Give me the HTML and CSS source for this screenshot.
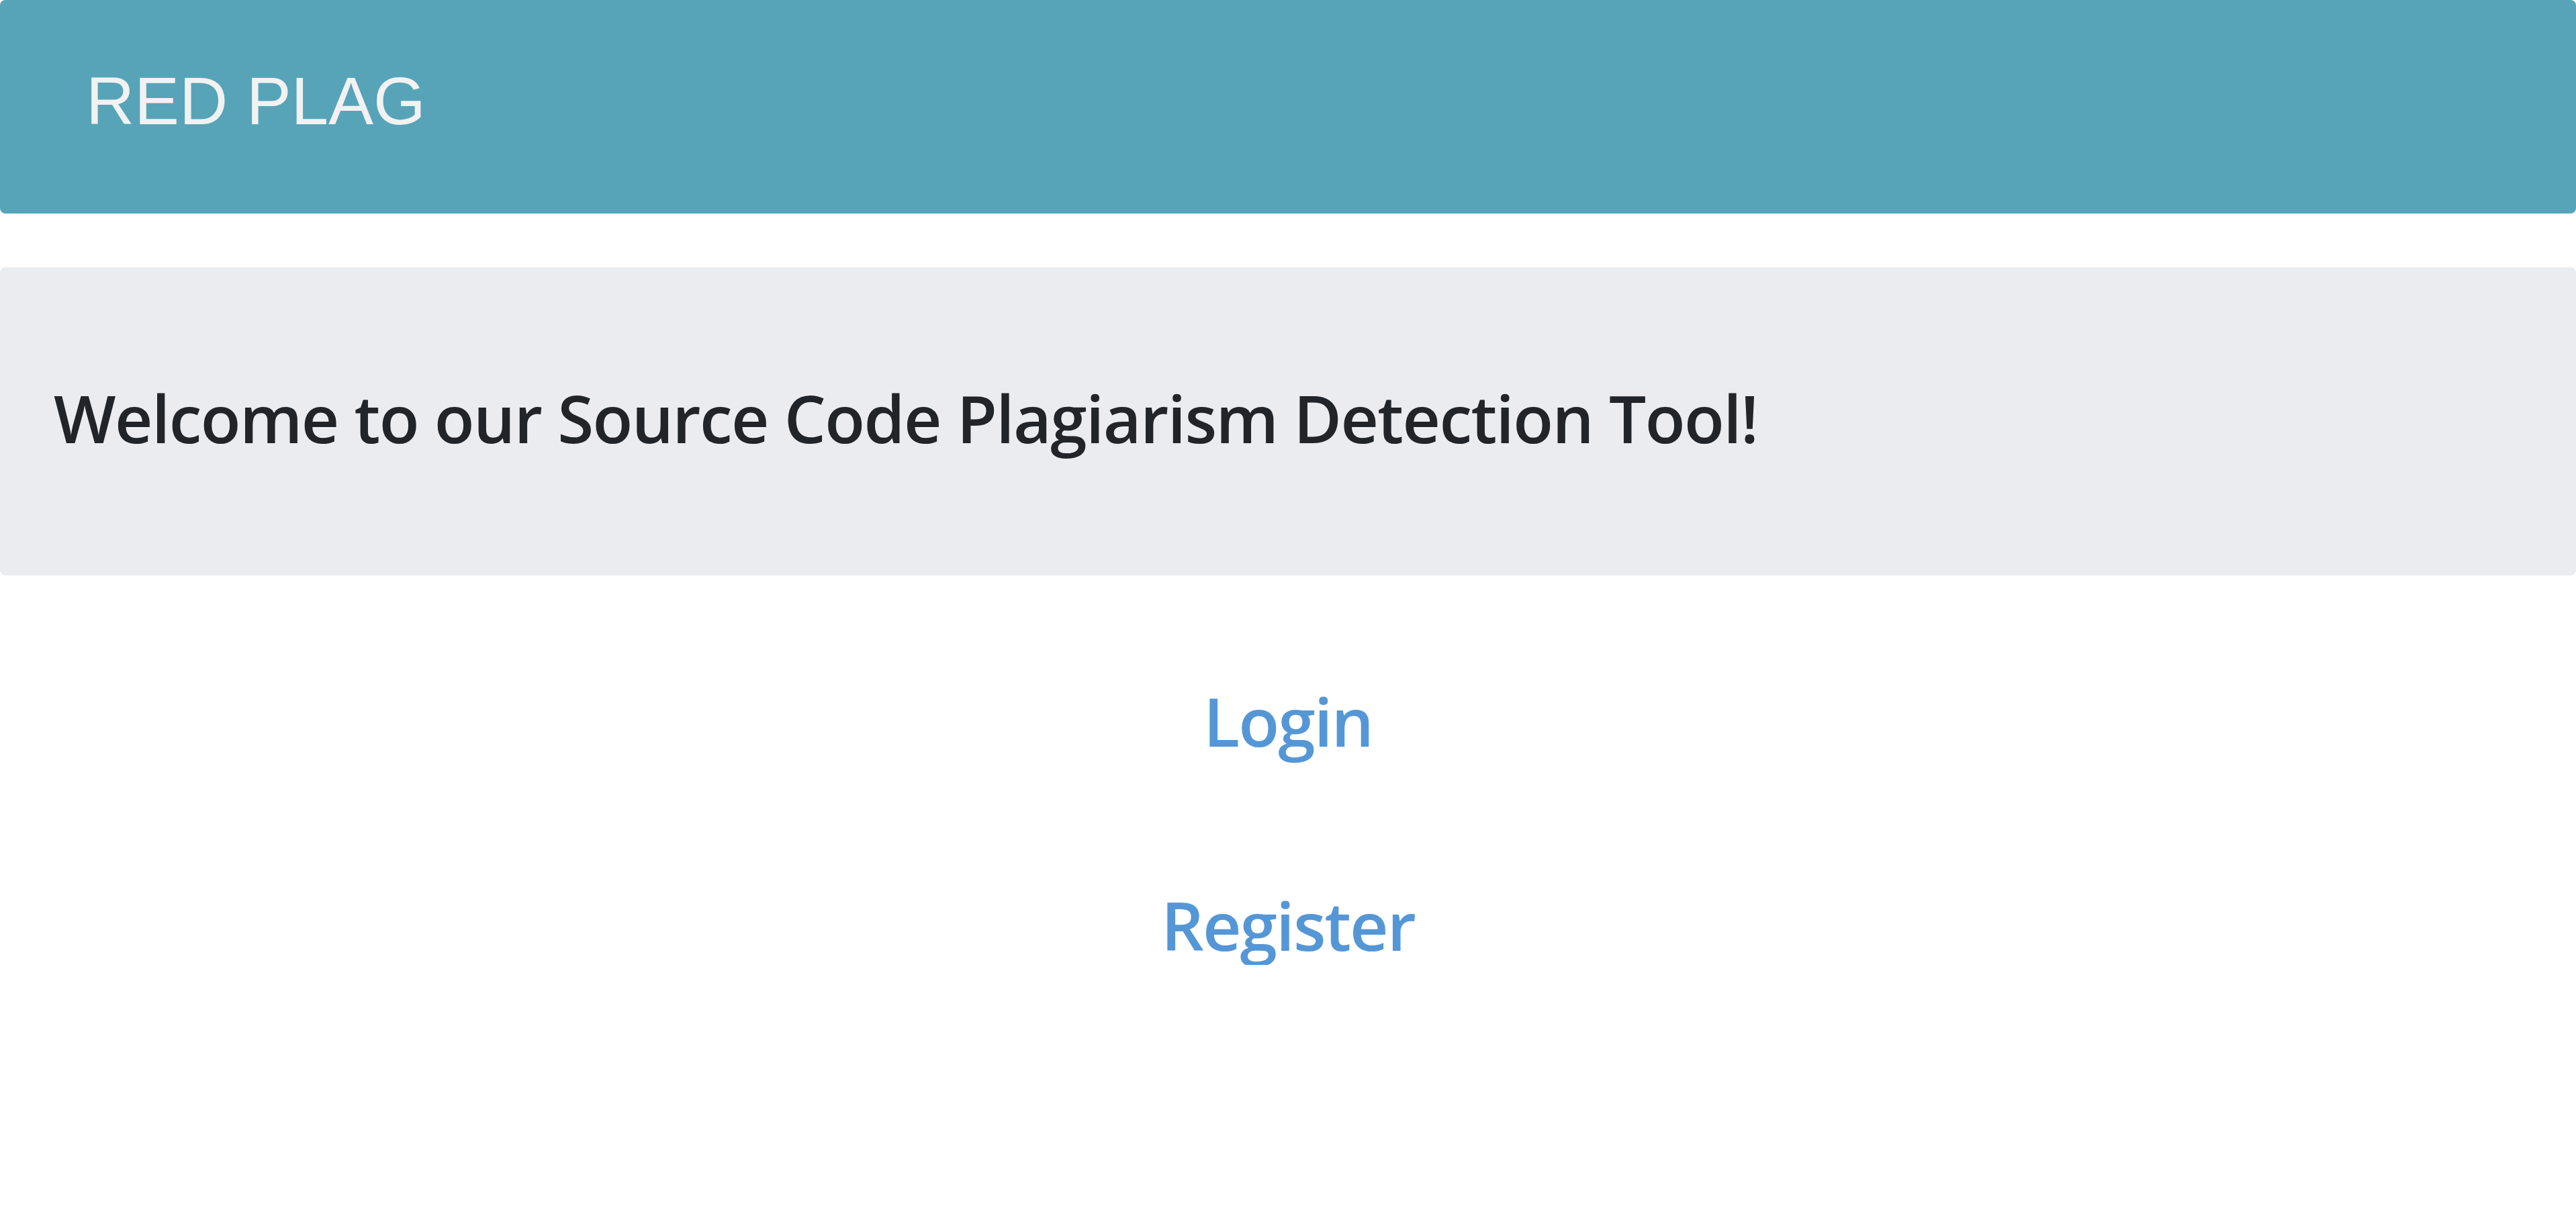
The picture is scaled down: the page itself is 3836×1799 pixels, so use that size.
FILE: index.html
```html
<!DOCTYPE html>
<html lang="en">
<head>
<meta charset="utf-8">
<title>RED PLAG</title>
<link rel="stylesheet" href="styles.css">
</head>
<body>
<header class="navbar">
  <span class="brand">RED PLAG</span>
</header>
<section class="jumbotron">
  <h1 class="welcome">Welcome to our Source Code Plagiarism Detection Tool!</h1>
</section>
<nav class="links">
  <a class="link" href="#">Login</a>
  <a class="link" href="#">Register</a>
</nav>
</body>
</html>
```
FILE: styles.css
```css
html, body {
  margin: 0;
  padding: 0;
  background: #ffffff;
}
body {
  font-family: "Open Sans", "Noto Sans", sans-serif;
}
.navbar {
  height: 318px;
  background: #57a4b9;
  border-radius: 8px;
  display: flex;
  align-items: center;
  padding-left: 128px;
  box-sizing: border-box;
}
.brand {
  font-family: "Liberation Sans", Arial, sans-serif;
  font-size: 100px;
  color: #f2f2f2;
  line-height: 1;
  margin-top: -18px;
}
.jumbotron {
  margin-top: 80px;
  height: 459px;
  background: #ebecf0;
  border-radius: 8px;
  display: flex;
  align-items: center;
  padding-left: 80px;
  box-sizing: border-box;
}
.welcome {
  margin: 0 0 10px 0;
  font-size: 98px;
  font-weight: 600;
  letter-spacing: -1.6px;
  color: #212529;
  line-height: 1.2;
}
.links {
  display: flex;
  flex-direction: column;
  align-items: center;
  padding-top: 156px;
  gap: 184px;
}
.link {
  font-size: 100px;
  font-weight: 600;
  letter-spacing: -2px;
  color: #5597d6;
  text-decoration: none;
  line-height: 1.2;
}
```
